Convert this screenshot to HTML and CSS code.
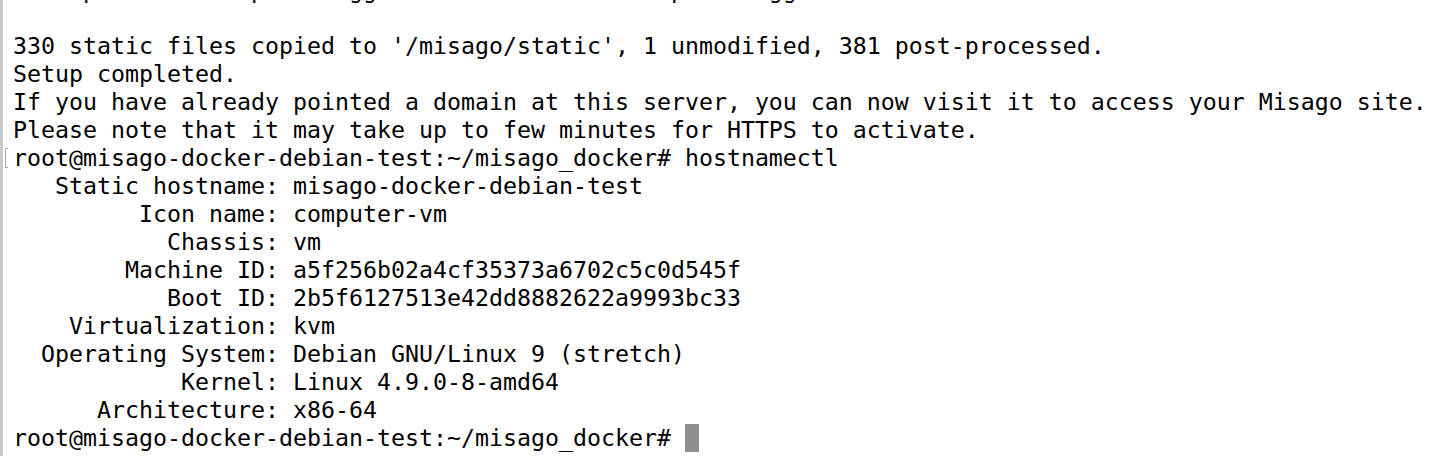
FILE: index.html
```html
<!DOCTYPE html>
<html lang="en">
<head>
<meta charset="utf-8">
<title>Terminal</title>
<link rel="stylesheet" href="styles.css">
</head>
<body>
<div class="term">
<div class="line cut">Post-processed 'apollo/eggshells.min.css' as 'apollo/eggshells.3ab1c.min.css'</div>
<div class="line"> </div>
<div class="line">330 static files copied to '/misago/static', 1 unmodified, 381 post-processed.</div>
<div class="line">Setup completed.</div>
<div class="line">If you have already pointed a domain at this server, you can now visit it to access your Misago site.</div>
<div class="line">Please note that it may take up to few minutes for HTTPS to activate.</div>
<div class="line marked"><span class="mark"></span>root@misago-docker-debian-test:~/misago_docker# hostnamectl</div>
<div class="line">   Static hostname: misago-docker-debian-test</div>
<div class="line">         Icon name: computer-vm</div>
<div class="line">           Chassis: vm</div>
<div class="line">        Machine ID: a5f256b02a4cf35373a6702c5c0d545f</div>
<div class="line">           Boot ID: 2b5f6127513e42dd8882622a9993bc33</div>
<div class="line">    Virtualization: kvm</div>
<div class="line">  Operating System: Debian GNU/Linux 9 (stretch)</div>
<div class="line">            Kernel: Linux 4.9.0-8-amd64</div>
<div class="line">      Architecture: x86-64</div>
<div class="line">root@misago-docker-debian-test:~/misago_docker# <span class="cursor"> </span></div>
</div>
</body>
</html>
```
FILE: styles.css
```css
html, body {
  margin: 0;
  padding: 0;
  background: #ffffff;
  overflow: hidden;
}

.term {
  height: 456px;
  box-sizing: border-box;
  border-left: 3px solid #c9c9c9;
  padding-left: 10px;
  overflow: hidden;
  font-family: "DejaVu Sans Mono", "Liberation Mono", monospace;
  font-size: 23.25px;
  line-height: 28px;
  color: #000000;
}

.line {
  position: relative;
  height: 28px;
  white-space: pre;
}

.cut {
  margin-top: -24px;
}

.mark {
  position: absolute;
  left: -8px;
  top: 4px;
  width: 3px;
  height: 20px;
  border: 1px solid #a9a9a9;
  border-right: none;
  box-sizing: border-box;
}

.cursor {
  display: inline-block;
  width: 14px;
  height: 28px;
  vertical-align: top;
  background: #8f8f8f;
}
```
